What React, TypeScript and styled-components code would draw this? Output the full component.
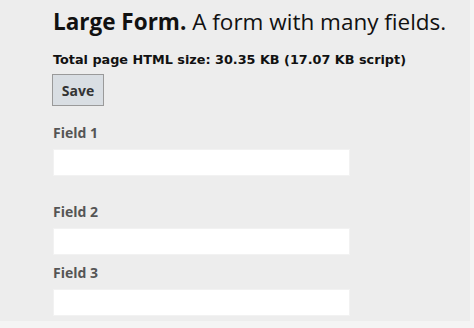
import styled, { createGlobalStyle } from "styled-components";

const GlobalStyle = createGlobalStyle`
  html, body {
    margin: 0;
    padding: 0;
    background: #f4f4f4;
  }
  body {
    font-family: "Open Sans", "Noto Sans", sans-serif;
    color: #111;
  }
`;

const fields = [
  { label: "Field 1", gap: 27 },
  { label: "Field 2", gap: 9 },
  { label: "Field 3", gap: 0 },
];

const App = () => {
  return (
    <>
      <GlobalStyle />
      <Page>
        <Title>
          <strong>Large Form.</strong> A form with many fields.
        </Title>
        <SizeInfo>Total page HTML size: 30.35 KB (17.07 KB script)</SizeInfo>
        <SaveButton type="button">Save</SaveButton>
        <FieldList>
          {fields.map((f) => (
            <Field key={f.label} $after={f.gap}>
              <Label>{f.label}</Label>
              <Input type="text" />
            </Field>
          ))}
        </FieldList>
      </Page>
    </>
  );
};

const Page = styled.div`
  width: 470px;
  height: 321px;
  box-sizing: border-box;
  background: #ededed;
  padding: 6px 0 0 53px;
  display: flex;
  flex-direction: column;
  align-items: flex-start;
  overflow: hidden;
`;

const Title = styled.h1`
  margin: 0;
  font-size: 22.5px;
  font-weight: 400;
  line-height: 32px;
  color: #111;
  strong {
    font-weight: 700;
  }
`;

const SizeInfo = styled.div`
  margin-top: 13px;
  font-family: "DejaVu Sans", "Open Sans", sans-serif;
  font-size: 12.8px;
  font-weight: 700;
  line-height: 18px;
  color: #111;
`;

const SaveButton = styled.button`
  margin-top: 5px;
  margin-left: -1px;
  width: 52px;
  height: 32px;
  box-sizing: border-box;
  background: #d9dee3;
  border: 1px solid #9a9a9a;
  font-family: "Open Sans", "Noto Sans", sans-serif;
  font-size: 14px;
  font-weight: 700;
  color: #333;
  padding: 0;
`;

const FieldList = styled.div`
  margin-top: 18px;
  display: flex;
  flex-direction: column;
`;

const Field = styled.div<{ $after: number }>`
  display: flex;
  flex-direction: column;
  gap: 7px;
  margin-bottom: ${(p) => p.$after}px;
`;

const Label = styled.label`
  font-size: 14px;
  font-weight: 700;
  line-height: 18px;
  color: #555;
`;

const Input = styled.input`
  width: 297px;
  height: 27px;
  box-sizing: border-box;
  background: #fff;
  border: 1px solid #f2f2f2;
  margin: 0;
  padding: 0 6px;
  outline: none;
`;

export default App;
